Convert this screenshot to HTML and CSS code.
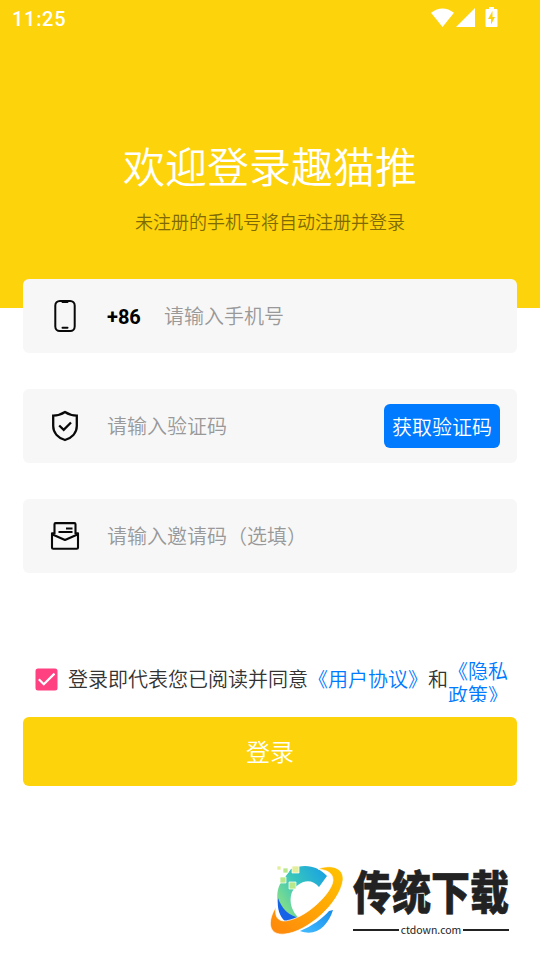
FILE: index.html
```html
<!DOCTYPE html>
<html lang="zh-CN">
<head>
<meta charset="utf-8">
<title>登录</title>
<link rel="stylesheet" href="styles.css">
</head>
<body>
<header class="hero">
  <div class="status">
    <span class="clock">11:25</span>
    <svg class="status-icons" width="68" height="20" viewBox="0 0 68 20" fill="#fff">
      <path d="M0 4.8Q11.5-3.8 23 4.8L11.5 19Z"/>
      <path d="M44 0V19H25Z"/>
      <path fill-rule="evenodd" d="M58-1h5v2h2.500q1 0 1 1v16q0 1-1 1h-10q-1 0-1-1V2q0-1 1-1H58ZM61.500 3L57 11h3v5.500L64 9h-2.500Z"/>
    </svg>
  </div>
  <h1 class="title">欢迎登录趣猫推</h1>
  <p class="subtitle">未注册的手机号将自动注册并登录</p>
</header>
<main class="form">
  <div class="field">
    <svg class="field-icon" width="32" height="34" viewBox="0 0 32 34" fill="none" stroke="#080808" stroke-width="2" stroke-linecap="round">
      <rect x="6.300" y="1.900" width="19.400" height="30.200" rx="4.500"/>
      <path d="M13.500 3h5M13.500 28.700h5"/>
    </svg>
    <span class="prefix">+86</span>
    <span class="placeholder">请输入手机号</span>
  </div>
  <div class="field">
    <svg class="field-icon" width="32" height="34" viewBox="0 0 32 34" fill="none" stroke="#080808" stroke-width="2.300">
      <path d="M16 3Q10.500 6.600 4.200 6.700V17C4.200 24 9.500 29 16 31C22.500 29 27.800 24 27.800 17V6.700Q21.500 6.600 16 3Z"/>
      <path d="M10.200 16.500l4.500 4.300L22 13.500"/>
    </svg>
    <span class="placeholder">请输入验证码</span>
    <button class="code-button">获取验证码</button>
  </div>
  <div class="field">
    <svg class="field-icon" width="32" height="34" viewBox="0 0 32 34" fill="none" stroke="#080808" stroke-width="2.100" stroke-linejoin="round">
      <path d="M5.500 15V5.200Q5.500 4.100 6.600 4.100H25.400Q26.500 4.100 26.500 5.200V15"/>
      <path d="M5.500 14.300H3V28.700Q3 29.700 4.200 29.700H27.800Q29 29.700 29 28.700V14.300H26.500M3 15.300L16 21L29 15.300M17 9.500h6.500M9.500 13h14"/>
    </svg>
    <span class="placeholder">请输入邀请码（选填）</span>
  </div>
  <div class="agreement">
    <svg class="checkbox" width="23" height="23" viewBox="0 0 23 23">
      <rect x=".5" y=".5" width="22" height="22" rx="2.500" fill="#ff4081"/>
      <path d="M3.800 11.300l5 5L19.500 5.600" fill="none" stroke="#fff" stroke-width="2.200"/>
    </svg>
    <span class="consent">登录即代表您已阅读并同意</span>
    <a class="link consent">《用户协议》</a>
    <span class="consent">和</span>
    <a class="link policy">《隐私<br>政策》</a>
  </div>
  <button class="login">登录</button>
</main>
<footer class="brand">
  <svg class="brand-logo" width="76" height="72" viewBox="0 0 76 72">
    <defs>
      <linearGradient id="arc" x1="0" y1=".7" x2="1" y2="0"><stop offset="0" stop-color="#8be184"/><stop offset=".45" stop-color="#37c5bd"/><stop offset="1" stop-color="#159de8"/></linearGradient>
      <linearGradient id="ring" x1="0" y1="1" x2="1" y2="0"><stop offset="0" stop-color="#ff860c"/><stop offset="1" stop-color="#ffc400"/></linearGradient>
      <linearGradient id="tail" x1="0" y1="1" x2="1" y2="0"><stop offset="0" stop-color="#45bcff"/><stop offset="1" stop-color="#168de9"/></linearGradient>
    </defs>
    <path fill="url(#arc)" d="M22 4C36-2 49 1 58 11L50 22C42 12 29 16 23 27C19 38 24 48 31 54L20 57C9 49 5 31 11 19Z"/>
    <path fill="#1763e8" d="M9 33C13 44 20 51 31 53L18 58C10 52 8 43 9 33Z"/>
    <path fill="url(#tail)" d="M31 66C43 61 53 54 60 46L64 45C59 61 47 72 31 66Z"/>
    <path fill="url(#ring)" stroke="#fff" stroke-width=".7" fill-rule="evenodd" d="M49 4C61-1 75 2 74 15C71 38 38 67 16 69C-1 71-2 56 7 42C5 54 11 58 21 55C41 50 64 26 64 15C64 8 58 5 49 4Z"/>
    <g stroke="#fff" stroke-width=".7"><path fill="#e3ee9c" d="M23 1h7v7h-7zM8 1h4v4H8z"/><path fill="#b9e88c" d="M14 3h5v5h-5zM11 12h6v6h-6zM20 17h7v7h-7z"/></g>
  </svg>
  <div class="brand-text">
    <strong class="brand-name">传统下载</strong>
    <div class="brand-domain"><span>ctdown.com</span></div>
  </div>
</footer>
</body>
</html>
```
FILE: styles.css
```css
* { box-sizing: border-box; }
body {
  margin: 0;
  width: 540px;
  height: 960px;
  overflow: hidden;
  background: #fff;
  font-family: Roboto, "Noto Sans CJK SC", sans-serif;
  font-weight: 350;
  color: #333;
}
button { border: 0; padding: 0; font: inherit; color: #fff; }
.hero { height: 308px; background: #fdd30b; text-align: center; }
.status { display: flex; justify-content: space-between; align-items: flex-start; height: 40px; padding: 8px 41px 0 12px; color: #fff; }
.clock { font-size: 20px; line-height: 22px; font-weight: 500; letter-spacing: .7px; }
.status-icons { overflow: visible; }
.title { margin: 99px 0 0; font-size: 42px; line-height: 60px; font-weight: 350; color: #fff; }
.subtitle { margin: 10px 0 0; font-size: 18px; line-height: 28px; color: #7f6a06; }
.form { display: flex; flex-direction: column; gap: 36px; margin-top: -29px; padding: 0 23px; }
.field { display: flex; align-items: center; height: 74px; padding: 0 17px 0 26px; border-radius: 6px; background: #f7f7f7; }
.field-icon { flex: none; margin-right: 26px; }
.prefix { width: 57px; padding-top: 2px; font-size: 20px; font-weight: 700; color: #000; }
.placeholder { flex: 1; padding-top: 2px; font-size: 20px; line-height: 30px; color: #999; }
.code-button { width: 116px; height: 44px; border-radius: 6px; background: #007aff; font-size: 20px; }
.agreement { display: flex; align-items: center; height: 46px; margin-top: 47px; padding-left: 12px; overflow: hidden; font-size: 20px; line-height: 24px; white-space: nowrap; }
.checkbox { flex: none; margin-right: 10px; }
.consent { padding-top: 2px; }
.link { color: #007aff; }
.policy { align-self: flex-start; margin-top: 4px; }
.login { height: 69px; margin-top: -21px; padding-bottom: 2px; border-radius: 6px; background: #fdd30b; font-size: 24px; }
.brand { display: flex; align-items: flex-start; gap: 8px; margin: 79px 0 0 269px; }
.brand-text { width: 156px; }
.brand-name { display: block; height: 58px; font-size: 39px; line-height: 58px; font-weight: 900; color: #222; transform: scaleY(1.18); -webkit-text-stroke: .5px #222; }
.brand-domain { display: flex; align-items: center; gap: 2px; font: 400 10.5px/14px "Noto Sans CJK SC", sans-serif; color: #222; }
.brand-domain::before, .brand-domain::after { content: ""; flex: 1; height: 2px; background: #222; }
```
